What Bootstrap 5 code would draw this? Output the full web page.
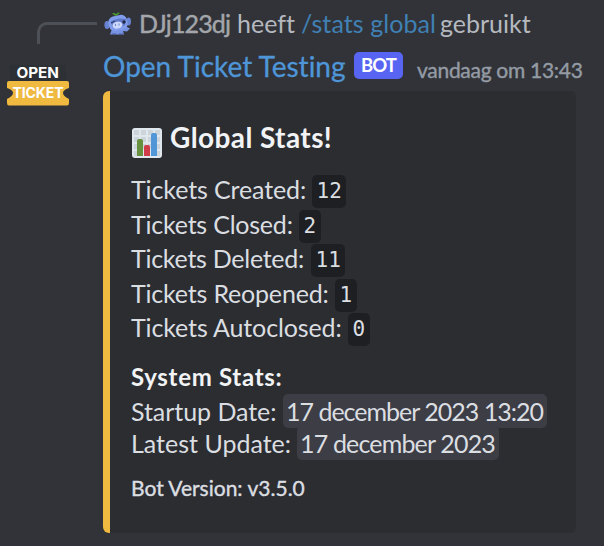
<!DOCTYPE html>
<html lang="nl" data-bs-theme="dark">
<head>
<meta charset="utf-8">
<meta name="viewport" content="width=device-width, initial-scale=1">
<title>Open Ticket</title>
<link href="https://cdn.jsdelivr.net/npm/bootstrap@5.3.0/dist/css/bootstrap.min.css" rel="stylesheet">
<style>
body{background:#313338;font-family:Lato,"Noto Sans",sans-serif;font-variant-ligatures:none;font-size:25px;color:#dbdee1;height:546px;white-space:nowrap}
.gutter{width:103px}
.spine{width:60px;height:22px;margin:22px 0 0 37px;border:3px solid #4e5058;border-right:0;border-bottom:0;border-top-left-radius:10px}
.logo{display:block;margin:20px 0 0 6px}
.reply-line{height:47px;line-height:47px;color:#b5b9bf}
.reply-line .avatar{margin:0 7px 0 1px}
.user{color:#a4a6ab;letter-spacing:-.85px;width:98px;-webkit-text-stroke:.4px}
.verb{width:64px}
.cmd{color:#4080b4;width:139px;letter-spacing:.08px}
.author-line{height:44px;line-height:39px}
.author{font-size:28px;color:#4e96d8;width:251px;-webkit-text-stroke:.3px}
.bot-tag{background:#5865f2;color:#fff;width:49px;height:27px;border-radius:5px;font-size:18.5px;font-weight:700;letter-spacing:-1px;line-height:26px;margin-top:5px}
.stamp{font-size:21px;color:#949ba4;margin-left:14px;letter-spacing:-.29px;line-height:45px;-webkit-text-stroke:.4px}
.embed{width:473px;height:442px;background:#2b2d31;border-left:7px solid #f0b940;border-radius:6px;padding:26px 0 31px 21px}
.embed-title{height:40px;line-height:41px;font-size:28px;font-weight:700;color:#f2f3f5;letter-spacing:.4px;margin-bottom:14px}
.embed-title svg{margin:11px 8px 0 1px}
.stat{height:34.5px;line-height:36px}
.k1{width:181px;letter-spacing:-.12px}.k2{width:168px;letter-spacing:-.22px}.k3{width:180px;letter-spacing:-.27px}.k4{width:204px;letter-spacing:-.19px}.k5{width:217px;letter-spacing:-.13px}
.num{background:#1e1f22;border-radius:5px;height:33px;line-height:32px;padding:0 4.5px;font-family:"DejaVu Sans Mono",monospace;font-size:21px;margin-top:4px}
.sys{height:36px;line-height:35px;font-size:24px;font-weight:700;color:#f2f3f5;letter-spacing:.7px;margin-top:15.5px}
.when{height:32px;line-height:33px}
.d1{width:152px;letter-spacing:-.05px}.d2{width:166px}
.date{background:#3c3d45;border-radius:5px;height:34px;line-height:35px;padding:0 3px;letter-spacing:-1px;margin-top:-1px;width:264px}
.date.short{width:202px;letter-spacing:-.83px}
.version{font-size:21px;line-height:28px;margin-top:15px;-webkit-text-stroke:.4px}
</style>
</head>
<body class="d-flex overflow-hidden">
<aside class="gutter flex-shrink-0">
  <div class="spine"></div>
  <svg class="logo" width="65" height="44" viewBox="0 0 65 44">
    <rect x="4" y="1" width="56" height="17" rx="1" fill="#2d3035"/>
    <path d="M3 17H61Q63 17 63 19V24Q57 26 57 29Q57 32 63 35V39Q63 41.500 61 41.500H3Q1 41.500 1 39V35Q7 32 7 29Q7 26 1 24V19Q1 17 3 17Z" fill="#f0b940"/>
    <g fill="#fff" font-family="Inter,'Liberation Sans',sans-serif" font-weight="700" font-size="14.500">
      <text x="10.500" y="14" textLength="42.500" lengthAdjust="spacingAndGlyphs">OPEN</text>
      <text x="6.500" y="33.500" font-size="14" textLength="51">TICKET</text>
    </g>
  </svg>
</aside>
<main>
  <div class="reply-line d-flex">
    <svg class="avatar flex-shrink-0" width="28" height="48" viewBox="0 0 28 48">
      <path d="M8 13.500Q10 12.500 12 14Q14 11.500 16 13L12 16L10 15Z" fill="#4c9a2d"/>
      <ellipse cx="3" cy="25" rx="2.600" ry="4" fill="#6883d2"/><ellipse cx="24.700" cy="21.500" rx="2.300" ry="4" fill="#6883d2"/>
      <path d="M8 29L6 34.500H20L19 31L23 31.500L26 28.500L21 26Z" fill="#7892e2"/>
      <rect x="4.500" y="15.500" width="19" height="15" rx="6" fill="#829cec" transform="rotate(-13 14 23)"/>
      <path d="M6.500 22Q13 17 22 19L21 25Q14 30 9 27Z" fill="#6078c8"/>
      <ellipse cx="13.500" cy="25" rx="5" ry="3.500" fill="#cbd7fb" transform="rotate(-10 14 25)"/>
      <path d="M11.500 24V26M15 23.500V25.500" stroke="#7187ca"/>
      <circle cx="20" cy="22" r="1.700" fill="#202743"/><path d="M7 23L11 21" stroke="#28345e"/>
      <path d="M8 34H12M15 34H19" stroke="#445aa6"/>
    </svg>
    <span class="user">DJj123dj</span><span class="verb">heeft</span><span class="cmd">/stats global</span><span>gebruikt</span>
  </div>
  <div class="author-line d-flex">
    <span class="author">Open Ticket Testing</span><span class="bot-tag text-center">BOT</span><span class="stamp">vandaag om 13:43</span>
  </div>
  <section class="embed">
    <div class="embed-title d-flex">
      <svg width="30" height="30" viewBox="0 0 30 30">
        <rect width="30" height="30" rx="3" fill="#e1e8ed"/>
        <g fill="#ccd4dc"><path d="M2 2H7V7H2zM9 2H14V7H9zM16 2H21V7H16zM23 2H28V7H23zM2 9H7V14H2zM9 9H14V14H9zM16 9H21V14H16zM23 9H28V14H23zM2 16H7V21H2zM9 16H14V21H9zM16 16H21V21H16zM23 16H28V21H23zM2 23H7V28H2zM23 23H28V28H23z"/></g>
        <path d="M5 28V13Q5 11 7 11H9Q11 11 11 13V28Z" fill="#67913f"/>
        <path d="M12 28V19Q12 17 14 17H16Q18 17 18 19V28Z" fill="#d13c49"/>
        <path d="M19 28V7Q19 5 21 5H23Q25 5 25 7V28Z" fill="#5197d8"/>
      </svg><span>Global Stats!</span>
    </div>
    <div class="stat d-flex"><span class="k1">Tickets Created:</span><span class="num">12</span></div>
    <div class="stat d-flex"><span class="k2">Tickets Closed:</span><span class="num">2</span></div>
    <div class="stat d-flex"><span class="k3">Tickets Deleted:</span><span class="num">11</span></div>
    <div class="stat d-flex"><span class="k4">Tickets Reopened:</span><span class="num">1</span></div>
    <div class="stat d-flex"><span class="k5">Tickets Autoclosed:</span><span class="num">0</span></div>
    <div class="sys">System Stats:</div>
    <div class="when d-flex"><span class="d1">Startup Date:</span><span class="date">17 december 2023 13:20</span></div>
    <div class="when d-flex"><span class="d2">Latest Update:</span><span class="date short">17 december 2023</span></div>
    <div class="version">Bot Version: v3.5.0</div>
  </section>
</main>
<script src="https://cdn.jsdelivr.net/npm/bootstrap@5.3.0/dist/js/bootstrap.bundle.min.js"></script>
</body>
</html>
